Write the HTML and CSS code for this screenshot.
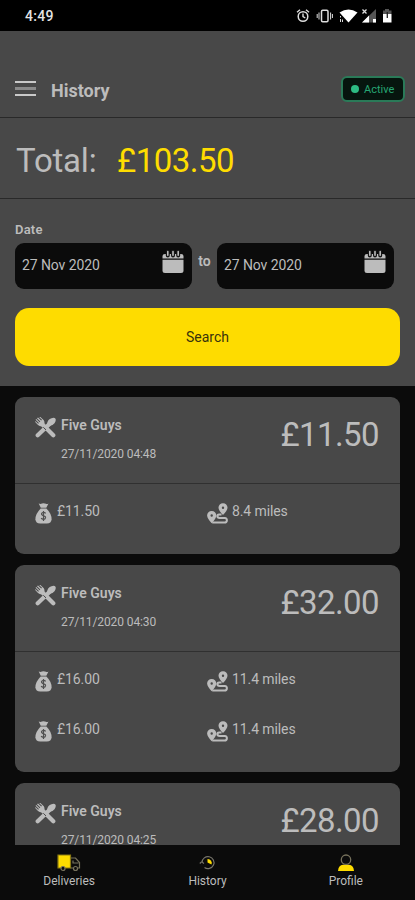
FILE: index.html
```html
<!DOCTYPE html>
<html lang="en">
<head>
<meta charset="utf-8">
<title>History</title>
<link rel="stylesheet" href="styles.css">
</head>
<body>
<svg class="defs" aria-hidden="true">
  <symbol id="calendar" viewBox="0 0 22 24">
    <path d="M3 4H19Q21.500 4 21.500 6V8.500H.5V6Q.5 4 3 4Z"/>
    <path d="M.5 9.800H21.500V20.500Q21.500 23 19 23H3Q.5 23 .5 20.500Z"/>
    <path d="M5.800 1.500V5.500M11 1.500V5.500M16.200 1.500V5.500" stroke="#161616" stroke-width="4" stroke-linecap="round"/>
    <path d="M5.800 1.500V5.300M11 1.500V5.300M16.200 1.500V5.300" stroke="currentColor" stroke-width="1.600" stroke-linecap="round"/>
  </symbol>
  <symbol id="food" viewBox="0 0 21 21">
    <path d="M2.700 18.300 15 6.500M7 7 18.300 18.300" stroke="currentColor" stroke-width="4.200" stroke-linecap="round"/>
    <path d="M12 7Q12.500 2.500 16.500 1.200Q19.500.200 20.500 1.800Q21.300 3.700 19.500 6.200Q17.500 9 14 9Z"/>
    <path d="M3 .5 6.200 3.500 7 2.800 4.200.2 5.400 0 8.800 3.200Q10.200 5 9.300 7.800L7.800 9.300Q5 9.800 3 8L.2 5 .4 4 3.200 6.700 3.900 6 .6 2.700 1.200 2 4.700 5.200 5.300 4.500 2 1.300Z"/>
    <path d="M8.300 10.300 11 12.900" stroke="#484848" stroke-width="1"/>
  </symbol>
  <symbol id="bag" viewBox="0 0 17 21">
    <path d="M3.700.5Q5.500 1.400 7 .5Q8.500 0 10 .6Q11.800 1.500 13.500.5L11.300 4.700H5.800Z"/>
    <path d="M5.700 5.600H11.400Q16.700 11 16.600 16.300Q16.300 20.500 11.800 20.600H5.200Q.7 20.500.4 16.300Q.4 11 5.700 5.600Z"/>
    <path d="M10.700 10.300Q9.500 9.100 7.900 9.500Q6.100 10.100 6.700 11.600Q7.100 12.500 8.700 12.800Q10.800 13.300 10.500 14.900Q10.100 16.500 8.300 16.300Q6.900 16.200 6.100 15.200M8.500 8V18" fill="none" stroke="#505050" stroke-width="1.200"/>
  </symbol>
  <symbol id="route" viewBox="0 0 21 21">
    <path d="M16 .2A4.400 4.400 0 0 1 20.500 4.700Q20.300 7.800 16 12Q11.700 7.800 11.500 4.700A4.400 4.400 0 0 1 16 .2ZM16 3.500A1.200 1.200 0 1 0 16 5.900A1.200 1.200 0 0 0 16 3.500Z"/>
    <path d="M4.700 8A4.500 4.500 0 0 1 9.300 12.500Q9.100 15.700 4.700 20.200Q.3 15.700.1 12.500A4.500 4.500 0 0 1 4.700 8ZM4.700 11.300A1.200 1.200 0 1 0 4.700 13.700A1.200 1.200 0 0 0 4.700 11.300Z"/>
    <path d="M14.500 11.500H12.200Q10.200 11.700 10.300 13.200Q10.500 14.900 12.500 14.900H17.800Q19.900 15 19.900 17.200Q19.800 19.600 17.500 19.600H5.200" fill="none" stroke="currentColor" stroke-width="2"/>
  </symbol>
</svg>

<div class="status">
  <span class="clock">4:49</span>
  <svg class="status-icons" viewBox="0 0 98 16" fill="none" stroke="#ddd">
    <circle cx="8" cy="8.500" r="4.800" stroke-width="1.500"/>
    <path d="M8 5.500V8.500L10.300 10M2 4.300 5 1.800M11 1.800 14 4.300" stroke-width="1.400"/>
    <rect x="26.500" y="2.200" width="6.500" height="11.500" rx="1.200" stroke-width="1.500"/>
    <path d="M24 4.500V11.500M35.600 4.500V11.500M22.200 6V10M37.400 6V10" stroke-width="1"/>
    <path d="M44.500 4.500Q53.500-1.500 62.500 4.500L53.500 14.500Z" fill="#fff" stroke="none"/>
    <path d="M45.500 8V9.500M45.500 11V14M47.500 11.500V14" stroke-width="1"/>
    <path d="M67 14.500 81 1V14.500Z" fill="#555" stroke="none"/>
    <path d="M67 14.500 74 7.500V14.500ZM78 11H81V14.500H78Z" fill="#fff" stroke="none"/>
    <path d="M67.500 1.500 71.500 5.500M71.500 1.500 67.500 5.500" stroke-width="1.300"/>
    <path d="M88 2.500H90V1H94V2.500H96.500V6H88Z" fill="#555" stroke="none"/>
    <path d="M88 6H96.500V14.500H88Z" fill="#fff" stroke="none"/>
    <path d="M92.300 4V10" stroke="#222" stroke-width="1.300"/>
  </svg>
</div>

<header class="header">
  <div class="menu"><i></i><i></i><i></i></div>
  <h1>History</h1>
  <div class="active"><span class="dot"></span>Active</div>
</header>

<section class="total">
  <span class="total-label">Total:</span>
  <span class="total-value">£103.50</span>
</section>

<section class="filter">
  <div class="label">Date</div>
  <div class="dates">
    <div class="date"><span>27 Nov 2020</span><svg><use href="#calendar"/></svg></div>
    <span class="to">to</span>
    <div class="date"><span>27 Nov 2020</span><svg><use href="#calendar"/></svg></div>
  </div>
  <button class="search">Search</button>
</section>

<main class="list">
  <article class="card">
    <div class="card-head">
      <svg class="food"><use href="#food"/></svg>
      <div class="place"><h2>Five Guys</h2><time>27/11/2020 04:48</time></div>
      <div class="amount">£11.50</div>
    </div>
    <div class="rows">
      <div class="row"><svg class="bag"><use href="#bag"/></svg><span class="fee">£11.50</span><svg class="route"><use href="#route"/></svg><span>8.4 miles</span></div>
    </div>
  </article>
  <article class="card">
    <div class="card-head">
      <svg class="food"><use href="#food"/></svg>
      <div class="place"><h2>Five Guys</h2><time>27/11/2020 04:30</time></div>
      <div class="amount">£32.00</div>
    </div>
    <div class="rows">
      <div class="row"><svg class="bag"><use href="#bag"/></svg><span class="fee">£16.00</span><svg class="route"><use href="#route"/></svg><span>11.4 miles</span></div>
      <div class="row"><svg class="bag"><use href="#bag"/></svg><span class="fee">£16.00</span><svg class="route"><use href="#route"/></svg><span>11.4 miles</span></div>
    </div>
  </article>
  <article class="card">
    <div class="card-head">
      <svg class="food"><use href="#food"/></svg>
      <div class="place"><h2>Five Guys</h2><time>27/11/2020 04:25</time></div>
      <div class="amount">£28.00</div>
    </div>
  </article>
</main>

<nav class="nav">
  <div class="tab">
    <svg viewBox="0 0 24 18" stroke="#77725c" stroke-width="1.200">
      <path d="M13.500 4H18.500L22.500 8.500V14H21M16 14H13.500M16 6.500V9H21.500"/>
      <path d="M1 1H13.500V14H1Z" fill="#fedc00" stroke="#8c7b12"/>
      <circle cx="6" cy="14.500" r="2" fill="#0b0b0b"/><circle cx="18.500" cy="14.500" r="2" fill="#0b0b0b"/>
    </svg>
    <span>Deliveries</span>
  </div>
  <div class="tab">
    <svg viewBox="0 0 24 18" stroke="#77746a" stroke-width="1.200">
      <path d="M7 8.500A6 6 0 1 1 9.500 13.500M4.800 9.500 6.900 7.500 8.800 9.700"/>
      <path d="M12.500 5A4 4 0 0 1 16.500 10.500L12.500 8.500Z" fill="#fedc00" stroke="none"/>
    </svg>
    <span>History</span>
  </div>
  <div class="tab">
    <svg viewBox="0 0 24 18">
      <path d="M4 17Q4.500 11 9 10.800H15Q19.500 11 20 17Z" fill="#fedc00"/>
      <circle cx="12" cy="5.700" r="4.700" fill="#0b0b0b" stroke="#77725c" stroke-width="1.300"/>
    </svg>
    <span>Profile</span>
  </div>
</nav>
</body>
</html>
```

FILE: styles.css
```css
* { box-sizing: border-box; margin: 0; }
body {
  width: 415px;
  height: 900px;
  overflow: hidden;
  display: flex;
  flex-direction: column;
  background: #0b0b0b;
  color: #bcbcbc;
  font-family: Roboto, "Liberation Sans", sans-serif;
}
.defs { display: none; }
svg { display: block; flex: none; fill: currentColor; }
.status {
  height: 31px;
  flex: none;
  background: #000;
  display: flex;
  justify-content: space-between;
  padding: 8px 22px 0 25px;
}
.clock { font-size: 14px; line-height: 17px; font-weight: 500; letter-spacing: 0.3px; color: #e4e4e4; }
.status-icons { width: 98px; height: 16px; fill: none; }
.header {
  height: 87px;
  flex: none;
  background: #484848;
  border-bottom: 1px solid #292929;
  display: flex;
  align-items: flex-start;
  padding: 45px 10px 0 15px;
}
.menu { width: 21px; padding-top: 5px; display: grid; gap: 4px; }
.menu i { height: 2px; background: #c9c9c9; }
.menu i:nth-child(2) { height: 3px; background: #8b8b8b; }
h1 { margin-left: 15px; font-size: 18px; line-height: 30px; font-weight: 700; }
.active {
  margin-left: auto;
  width: 64px;
  height: 26px;
  border: 2px solid #2a7a58;
  border-radius: 6px;
  background: #06150e;
  color: #27a673;
  font-size: 11px;
  display: flex;
  align-items: center;
  gap: 5px;
  padding-left: 8px;
}
.dot { width: 8px; height: 8px; border-radius: 50%; background: #2dbb83; }
.total {
  height: 81px;
  flex: none;
  background: #484848;
  border-bottom: 1px solid #292929;
  display: flex;
  align-items: center;
  padding: 5px 15px 0;
  font-size: 33px;
}
.total-label { width: 102px; padding-left: 1px; letter-spacing: -0.2px; }
.total-value { color: #fedc00; letter-spacing: -0.5px; }
.filter { height: 187px; flex: none; background: #484848; padding: 22px 15px 0; }
.label { font-size: 13px; line-height: 18px; font-weight: 600; letter-spacing: 0.2px; }
.dates { display: flex; margin-top: 4px; }
.date {
  width: 177px;
  height: 46px;
  border-radius: 9px;
  background: #0b0b0b;
  display: flex;
  align-items: flex-start;
  justify-content: space-between;
  padding: 7px 8px 0 7px;
  font-size: 14px;
}
.date span { line-height: 31px; letter-spacing: -0.1px; }
.date svg { width: 22px; height: 24px; }
.to { width: 25px; text-align: center; font-size: 14px; line-height: 36px; font-weight: 600; }
.search {
  display: block;
  width: 385px;
  height: 58px;
  margin-top: 19px;
  border: 0;
  border-radius: 14px;
  background: #fedc00;
  color: #38330c;
  font: 14px Roboto, "Liberation Sans", sans-serif;
}
.list { flex: 1; min-height: 0; overflow: hidden; padding: 11px 15px 0; }
.card { background: #484848; border-radius: 9px; margin-bottom: 11px; }
.card-head {
  height: 87px;
  border-bottom: 1px solid #303030;
  display: flex;
  align-items: flex-start;
  padding: 18px 21px 0 20px;
}
.food { width: 21px; height: 21px; margin-top: 2px; }
.place { margin-left: 5px; }
h2 { font-size: 14px; line-height: 20px; font-weight: 600; }
time { display: block; margin-top: 9px; font-size: 12px; line-height: 20px; letter-spacing: -0.1px; }
.amount { margin-left: auto; font-size: 33px; line-height: 40px; letter-spacing: -0.6px; }
.rows { padding: 2px 0 18px 20px; }
.row { height: 50px; display: flex; align-items: center; font-size: 14px; letter-spacing: -0.1px; }
.bag { width: 17px; height: 21px; margin-top: 4px; }
.fee { width: 150px; margin-left: 5px; }
.route { width: 21px; height: 21px; margin-right: 4px; margin-top: 4px; }
.nav { height: 55px; flex: none; background: #0b0b0b; display: grid; grid-template-columns: repeat(3, 1fr); }
.tab { display: flex; flex-direction: column; align-items: center; padding-top: 9px; }
.tab svg { width: 24px; height: 18px; fill: none; }
.tab span { font-size: 12px; line-height: 18px; }
```
